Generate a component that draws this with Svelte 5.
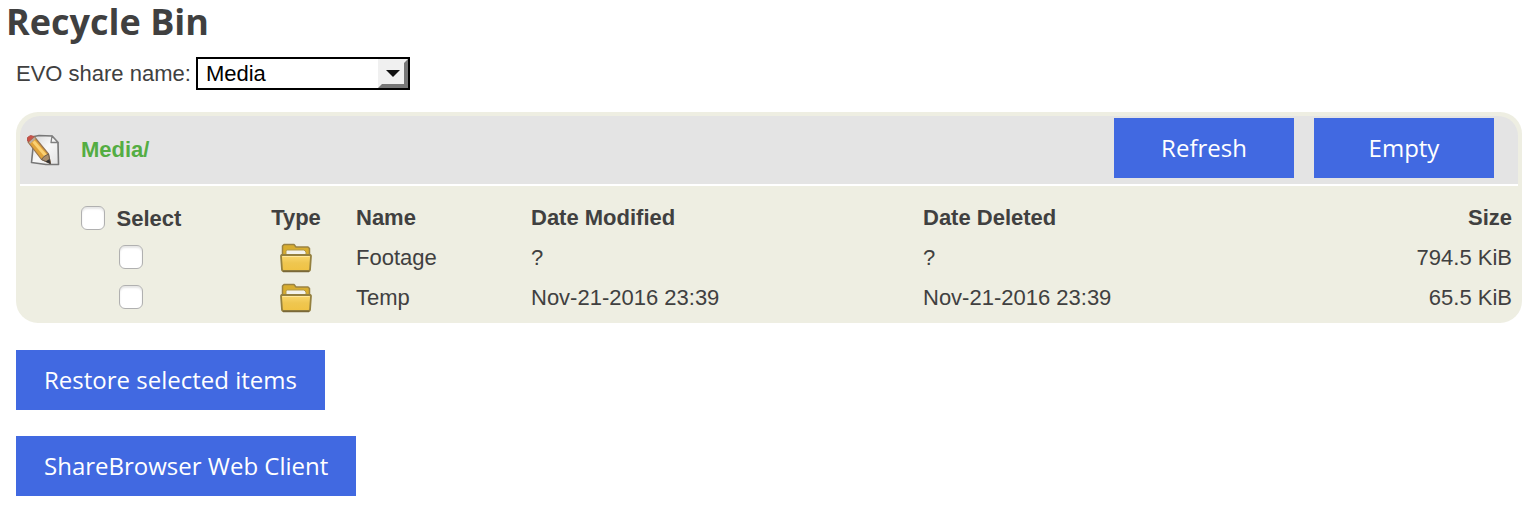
<script>
  let share = $state('Media');
  let items = $state([
    { name: 'Footage', modified: '?', deleted: '?', size: '794.5 KiB', selected: false },
    { name: 'Temp', modified: 'Nov-21-2016 23:39', deleted: 'Nov-21-2016 23:39', size: '65.5 KiB', selected: false }
  ]);
  let allSelected = $derived(items.length > 0 && items.every((item) => item.selected));

  function toggleAll(event) {
    const checked = event.currentTarget.checked;
    items.forEach((item) => (item.selected = checked));
  }
</script>

<main>
  <h1>Recycle Bin</h1>

  <div class="share">
    <label for="share">EVO share name:</label>
    <select id="share" bind:value={share}>
      <option>Media</option>
    </select>
  </div>

  <section class="panel">
    <header>
      <svg class="edit" viewBox="0 0 34 34" aria-hidden="true">
        <defs>
          <linearGradient id="paper" x1="0" y1="0" x2="1" y2="1">
            <stop offset="0" stop-color="#d4d4d4" />
            <stop offset=".5" stop-color="#f8f8f8" />
            <stop offset="1" stop-color="#e2e2e2" />
          </linearGradient>
        </defs>
        <path d="M8 3.500 L13 2.500 L26 3 L32 9.500 L32.500 31.500 L20 31.500 L5.500 29.500 L7 15 Z" fill="url(#paper)" stroke="#777" stroke-width="1.600" stroke-linejoin="round" />
        <path d="M26 3 L25 9.500 L32 9.500 Z" fill="#f5f5f5" stroke="#808080" stroke-width="1.300" stroke-linejoin="round" />
        <path d="M2 9 L8.500 4 L22.500 21 L24.500 30.500 L15.500 26.500 Z" fill="#e0a33a" stroke="#967451" stroke-width="1.200" stroke-linejoin="round" />
        <path d="M7.500 8.500 L20 23" stroke="#fbd173" stroke-width="3" />
        <path d="M1.500 8 L1.500 4.500 L4.500 2.500 L8 3.500 L3 8.500 Z" fill="#cb5147" stroke="#b4544b" />
        <path d="M3.500 10 L9 5" stroke="#b9aaa0" stroke-width="1.800" />
        <path d="M15.500 26.500 L18 23.500 L22.500 21 L24.500 30.500 Z" fill="#a88d6c" stroke="#6b5c4e" />
        <path d="M19.500 28.500 L23.500 26 L24.500 31 Z" fill="#333" />
      </svg>
      <a href="#media">Media/</a>
      <div class="actions">
        <button type="button">Refresh</button>
        <button type="button">Empty</button>
      </div>
    </header>

    <table>
      <colgroup>
        <col class="c-select" /><col class="c-type" /><col class="c-name" />
        <col class="c-date" /><col class="c-date" /><col />
      </colgroup>
      <thead>
        <tr>
          <th class="center">
            <label class="all"><input type="checkbox" checked={allSelected} onchange={toggleAll} />Select</label>
          </th>
          <th class="center">Type</th>
          <th>Name</th>
          <th>Date Modified</th>
          <th>Date Deleted</th>
          <th class="right">Size</th>
        </tr>
      </thead>
      <tbody>
        {#each items as item (item.name)}
          <tr>
            <td class="center">
              <input type="checkbox" aria-label={item.name} bind:checked={item.selected} />
            </td>
            <td class="center">
              <svg class="folder" viewBox="0 0 34 30" aria-hidden="true">
                <defs>
                  <linearGradient id="front" x1="0" y1="0" x2="0" y2="1">
                    <stop offset="0" stop-color="#fbd970" />
                    <stop offset=".5" stop-color="#efc650" />
                    <stop offset="1" stop-color="#f0c243" />
                  </linearGradient>
                </defs>
                <path d="M3.500 13 V3 L5 1.500 H15 L17 4 H29 L30.500 5.500 V13 Z" fill="#d8ad2f" stroke="#9a8343" stroke-width="1.500" stroke-linejoin="round" />
                <path d="M7 13 V8.500 Q7 7 8.500 7 H25 L27 9 V13 Z" fill="#f3f3ee" stroke="#b39a4b" />
                <path d="M2.500 12 H31.500 L32 13 L31 27 L30 28 H4 L3 27 L2 13 Z" fill="url(#front)" stroke="#94803f" stroke-width="1.800" stroke-linejoin="round" />
                <path d="M3.500 13.500 H30.500" stroke="#ffe79b" />
                <path d="M4 28.500 H30" stroke="#7a6838" stroke-width="1.500" />
              </svg>
            </td>
            <td>{item.name}</td>
            <td>{item.modified}</td>
            <td>{item.deleted}</td>
            <td class="right">{item.size}</td>
          </tr>
        {/each}
      </tbody>
    </table>
  </section>

  <div class="footer">
    <button type="button">Restore selected items</button>
    <button type="button">ShareBrowser Web Client</button>
  </div>
</main>

<style>
  :global(body) {
    background: #fff;
  }
  main {
    padding: 0 14px 18px 16px;
    color: #404040;
    font: 22px/26px "Liberation Sans", Arial, sans-serif;
  }
  h1 {
    margin: 0 0 0 -10px;
    font: bold 36px/44px "Open Sans", "Noto Sans", sans-serif;
  }
  .share {
    display: flex;
    align-items: center;
    gap: 5px;
    padding-top: 13px;
  }
  select {
    appearance: none;
    box-sizing: border-box;
    width: 214px;
    height: 33px;
    padding: 0 32px 0 8px;
    border: 2px solid #000;
    border-radius: 0;
    color: #000;
    font: inherit;
    background: #fff url("data:image/svg+xml,%3Csvg xmlns='http://www.w3.org/2000/svg' width='30' height='29'%3E%3Cpath d='M0 0H30V29H0Z' fill='%23f0f0f0'/%3E%3Cpath d='M30 0V29H0L4 25H26V4Z' fill='%23777'/%3E%3Cpath d='M8 11H22L15 18Z' fill='%23111'/%3E%3C/svg%3E") no-repeat right center;
  }
  .panel {
    margin-top: 22px;
    padding: 4px 4px 5px;
    border-radius: 22px;
    background: #eeeee2;
  }
  header {
    display: flex;
    align-items: center;
    height: 68px;
    padding: 0 24px 0 6px;
    border-bottom: 2px solid #fff;
    border-radius: 20px 20px 0 0;
    background: #e4e4e4;
    background-clip: padding-box;
  }
  .edit {
    width: 34px;
    height: 34px;
    margin-right: 21px;
  }
  header a {
    color: #54ad43;
    font-weight: bold;
    text-decoration: none;
  }
  .actions {
    display: flex;
    gap: 20px;
    margin: 0 0 4px auto;
  }
  button {
    height: 60px;
    padding: 0 28px;
    border: 0;
    color: #fff;
    background: #4169e1;
    font: 24px/32px "Open Sans", "Noto Sans", sans-serif;
  }
  .actions button {
    width: 180px;
  }
  table {
    width: 100%;
    margin-top: 12px;
    border-collapse: collapse;
    table-layout: fixed;
  }
  .c-select {
    width: 222px;
  }
  .c-type {
    width: 108px;
  }
  .c-name {
    width: 175px;
  }
  .c-date {
    width: 392px;
  }
  th,
  td {
    height: 40px;
    padding: 0 6px;
    text-align: left;
    white-space: nowrap;
  }
  .center {
    text-align: center;
  }
  .right {
    text-align: right;
  }
  .all {
    display: inline-flex;
    align-items: center;
    gap: 12px;
    vertical-align: middle;
  }
  input {
    appearance: none;
    display: block;
    box-sizing: border-box;
    width: 24px;
    height: 24px;
    margin: 0 auto 2px;
    border: 1px solid #b0b0b0;
    border-radius: 6px;
    background: #fff;
    box-shadow: inset 0 2px 2px #e6e6e6;
  }
  input:checked {
    background: #4169e1;
  }
  .folder {
    display: block;
    width: 34px;
    height: 30px;
    margin: 0 auto;
  }
  .footer {
    display: flex;
    flex-direction: column;
    align-items: flex-start;
    gap: 26px;
    margin-top: 27px;
  }
</style>
